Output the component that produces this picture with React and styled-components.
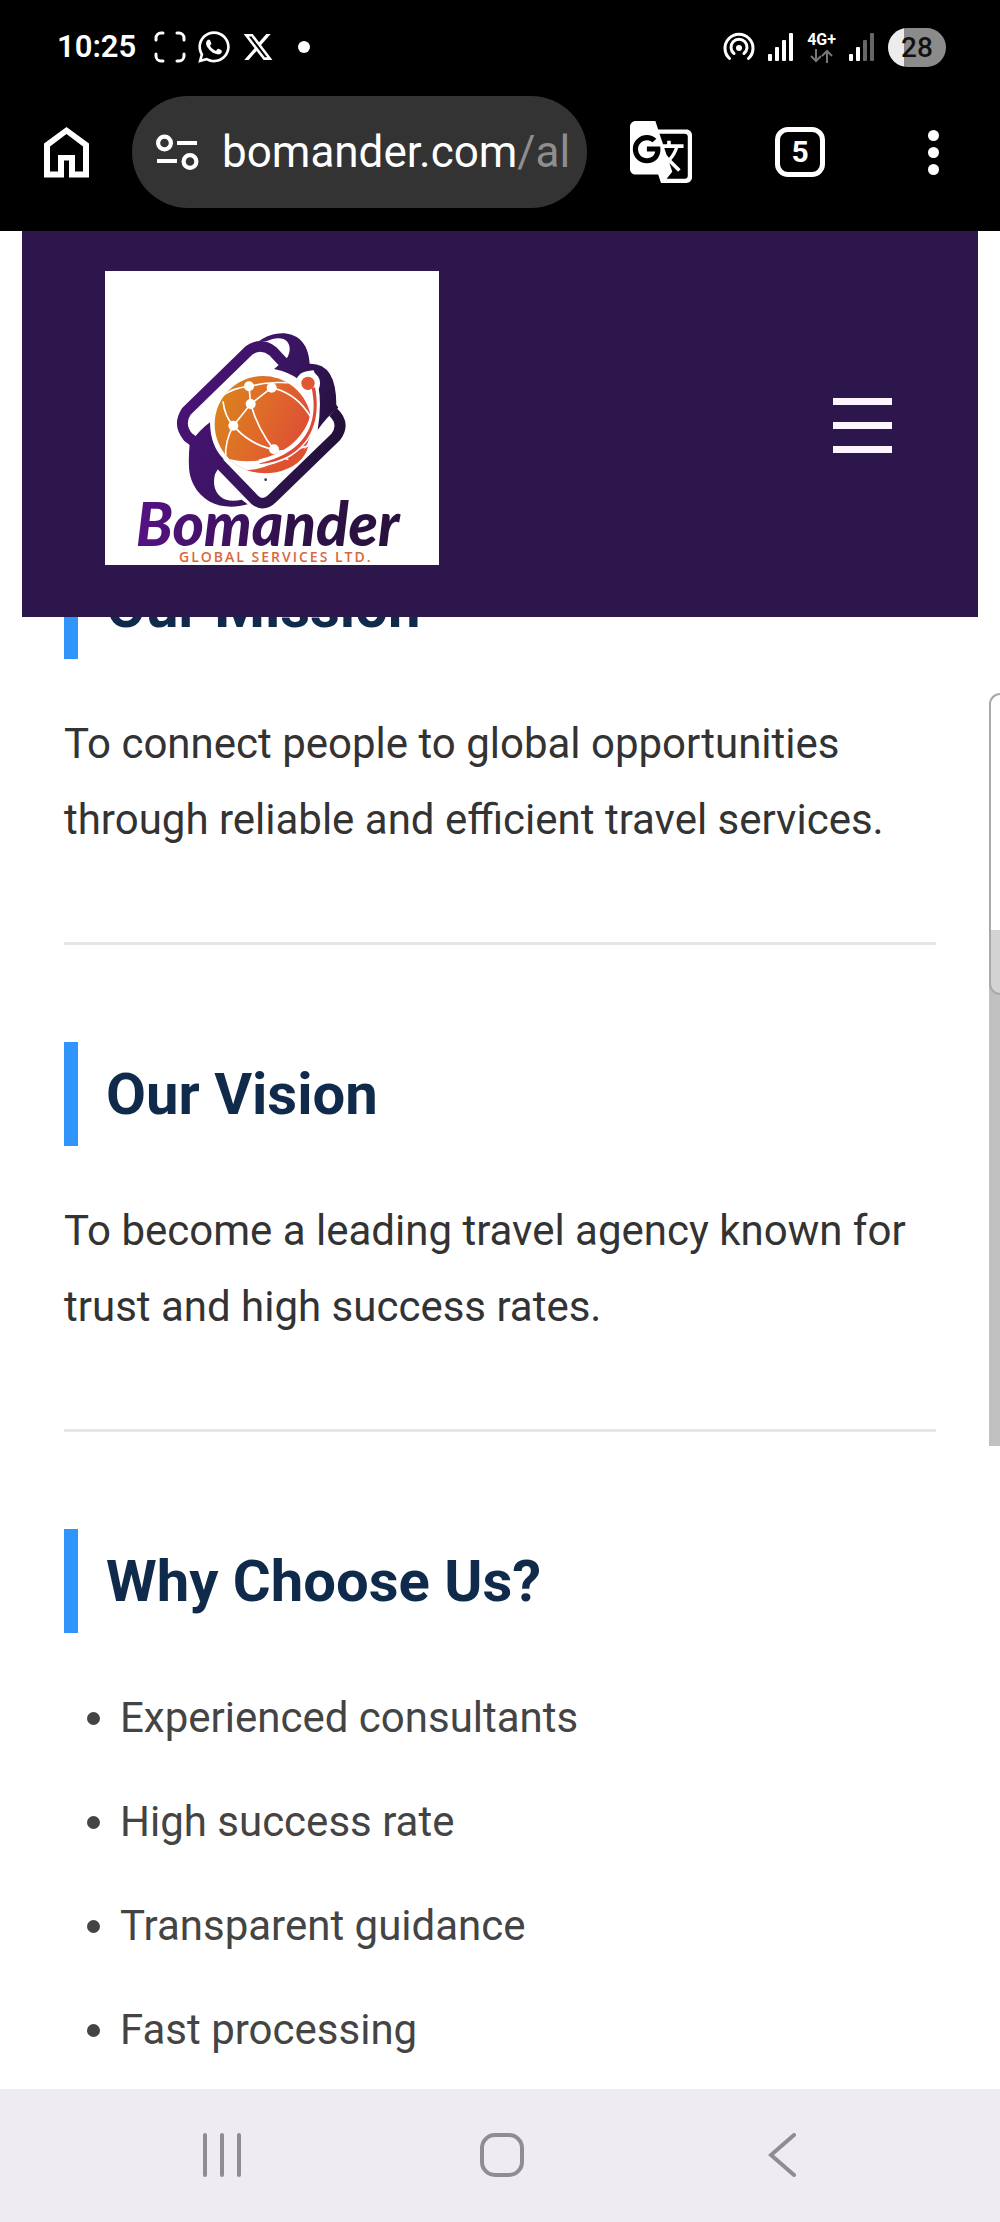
import React from 'react';
import styled, { createGlobalStyle } from 'styled-components';
import { FaWhatsapp } from 'react-icons/fa';
import { FaXTwitter } from 'react-icons/fa6';
import { MdGTranslate } from 'react-icons/md';

const GlobalStyle = createGlobalStyle`
  * {
    box-sizing: border-box;
  }
  body {
    margin: 0;
    background-color: #ffffff;
    font-family: Roboto, 'Liberation Sans', sans-serif;
  }
  button {
    display: flex;
    padding: 0;
    border: none;
    background: none;
    color: inherit;
    font: inherit;
    cursor: pointer;
  }
  svg {
    display: block;
    flex: none;
  }
`;

const Screen = styled.div`
  display: flex;
  flex-direction: column;
  height: 100vh;
  overflow: hidden;
`;

/* status bar */
const StatusBar = styled.div`
  display: flex;
  flex: none;
  justify-content: space-between;
  align-items: center;
  height: 94px;
  padding: 0 54px 0 57px;
  background-color: #000000;
  color: #ffffff;
`;

const StatusGroup = styled.div`
  display: flex;
  align-items: center;
  gap: ${({ $gap }) => $gap}px;
`;

const Clock = styled.time`
  margin-right: 8px;
  font-size: 31px;
  font-weight: 600;
  line-height: 34px;
`;

const MoreDot = styled.span`
  width: 12px;
  height: 12px;
  margin-left: 14px;
  border-radius: 50%;
  background-color: #ffffff;
`;

const Network = styled.div`
  display: flex;
  flex-direction: column;
  align-items: center;
  font-size: 16px;
  font-weight: 700;
  line-height: 18px;
`;

const Battery = styled.div`
  width: 58px;
  height: 39px;
  border-radius: 20px;
  background: linear-gradient(to right, #ececec 28%, #8b8b8b 28%);
  color: #111111;
  font-size: 28px;
  font-weight: 500;
  line-height: 39px;
  text-align: center;
`;

/* browser toolbar */
const Toolbar = styled.div`
  display: flex;
  flex: none;
  align-items: center;
  gap: 43px;
  padding: 2px 42px 23px 44px;
  background-color: #000000;
  color: #ffffff;
`;

const AddressBar = styled.div`
  display: flex;
  flex: 1;
  align-items: center;
  gap: 23px;
  min-width: 0;
  height: 112px;
  padding: 0 12px 0 24px;
  border-radius: 56px;
  background-color: #333333;
`;

const Address = styled.div`
  overflow: hidden;
  font-size: 44px;
  line-height: 56px;
  white-space: nowrap;
`;

const Path = styled.span`
  color: #8e8e8e;
`;

const Actions = styled.div`
  display: flex;
  align-items: center;
  gap: 83px;
`;

const TabsButton = styled.button`
  && {
    justify-content: center;
    align-items: center;
    width: 50px;
    height: 50px;
    border: 5px solid #ffffff;
    border-radius: 13px;
    font-size: 30px;
    font-weight: 700;
    line-height: 30px;
  }
`;

const MenuButton = styled.button`
  && {
    flex-direction: column;
    align-items: center;
    gap: 6px;
    width: 50px;
  }

  span {
    width: 11px;
    height: 11px;
    border-radius: 50%;
    background-color: #ffffff;
  }
`;

/* page */
const Viewport = styled.div`
  position: relative;
  flex: 1;
  min-height: 0;
  overflow: hidden;
`;

const SiteHeader = styled.header`
  position: sticky;
  top: 0;
  z-index: 1;
  display: flex;
  justify-content: space-between;
  align-items: center;
  margin: 0 22px;
  padding: 40px 86px 52px 83px;
  background-color: #2d164c;
`;

const LogoLink = styled.a`
  display: block;
  background-color: #ffffff;
`;

const Hamburger = styled.button`
  && {
    flex-direction: column;
    gap: 17px;
    padding-top: 15px;
  }

  span {
    width: 59px;
    height: 7px;
    background-color: #fdf5ff;
  }
`;

// the page is scrolled, so the first heading runs under the sticky header
const Content = styled.main`
  margin-top: -62px;
  padding: 0 64px;
`;

const Section = styled.section`
  margin-bottom: 97px;
  padding-bottom: 84px;
  border-bottom: 3px solid ${({ $last }) => ($last ? 'transparent' : '#e6e6e6')};
`;

const Title = styled.h2`
  margin: 0 0 47px;
  padding-left: 28px;
  border-left: 14px solid #2f95fb;
  color: #0f2a4a;
  font-size: 58px;
  font-weight: 700;
  line-height: 104px;
`;

const Text = styled.p`
  margin: 0;
  color: #333333;
  font-size: 42px;
  line-height: 76px;
`;

const Reasons = styled.ul`
  margin: 0;
  padding-left: 56px;
  color: #444444;
  font-size: 42px;
  line-height: 76px;
`;

const Reason = styled.li`
  margin-bottom: 28px;
`;

const ScrollTrack = styled.div`
  position: absolute;
  top: 462px;
  right: 0;
  width: 11px;
  height: 753px;
  background: linear-gradient(to bottom, transparent 237px, #c1c1c1 237px);
`;

const ScrollThumb = styled.div`
  height: 302px;
  border: 2px solid #a9a9a9;
  border-right: none;
  border-radius: 11px 0 0 11px;
  background: linear-gradient(to bottom, #ffffff 235px, #d3d3d3 235px);
`;

/* system navigation */
const NavBar = styled.nav`
  display: grid;
  flex: none;
  grid-template-columns: repeat(3, 1fr);
  justify-items: center;
  align-items: center;
  height: 133px;
  padding: 0 78px 2px 82px;
  background-color: #eeebf2;
`;

const Signal = ({ bars }) => (
  <svg width="26" height="28" viewBox="0 0 26 28" fill="#fff">
    <rect x="0" y="21" width="4" height="7" rx="1" />
    <rect x="7" y="14" width="4" height="14" rx="1" />
    <rect x="14" y="7" width="4" height="21" rx="1" opacity={bars > 2 ? 1 : 0.4} />
    <rect x="21" y="0" width="4" height="28" rx="1" opacity={bars > 3 ? 1 : 0.4} />
  </svg>
);

const CaptureIcon = () => (
  <svg width="32" height="32" viewBox="0 0 32 32" fill="none" stroke="#fff" strokeWidth="3" strokeLinecap="round">
    <path d="M2 9V7a5 5 0 0 1 5-5h2M23 2h2a5 5 0 0 1 5 5v2M30 23v2a5 5 0 0 1-5 5h-2M9 30H7a5 5 0 0 1-5-5v-2" />
  </svg>
);

const HotspotIcon = () => (
  <svg width="32" height="30" viewBox="0 0 32 30" fill="none" stroke="#fff" strokeWidth="3" strokeLinecap="round">
    <path d="M6.5 26.5A14 14 0 1 1 25.5 26.5" />
    <path d="M11 21.5A8 8 0 1 1 21 21.5" />
    <circle cx="16" cy="16" r="3" fill="#fff" stroke="none" />
  </svg>
);

const HomeIcon = () => (
  <svg width="45" height="51" viewBox="0 0 45 51">
    <path
      fill="#fff"
      fillRule="evenodd"
      d="M22.5 0 45 16.5V50.5H25V33.500H20V50.5H0V16.5ZM22.5 7 6 19.5V44.5H14V28H31V44.5H39V19.5Z"
    />
  </svg>
);

const TuneIcon = () => (
  <svg width="43" height="36" viewBox="0 0 43 36" fill="none" stroke="#fff" strokeWidth="4.2">
    <circle cx="8.5" cy="9" r="6.4" />
    <circle cx="34" cy="27.5" r="6.4" />
    <path d="M21 9H41M1 27H21" />
  </svg>
);

const BomanderLogo = () => (
  <svg width="334" height="294" viewBox="46 64 1002 882" role="img" aria-label="Bomander Global Services Ltd.">
    <defs>
      <linearGradient id="frame" gradientUnits="userSpaceOnUse" x1="280" y1="400" x2="760" y2="620">
        <stop offset="0" stopColor="#4b1277" />
        <stop offset="0.55" stopColor="#38155e" />
        <stop offset="1" stopColor="#1d1030" />
      </linearGradient>
      <linearGradient id="globe" x1="0" y1="0.3" x2="1" y2="0.7">
        <stop offset="0" stopColor="#d9831d" />
        <stop offset="0.5" stopColor="#e0682a" />
        <stop offset="1" stopColor="#dc4a3a" />
      </linearGradient>
      <linearGradient id="word" x1="0" y1="0" x2="1" y2="0">
        <stop offset="0" stopColor="#571284" />
        <stop offset="0.6" stopColor="#2e1148" />
        <stop offset="1" stopColor="#28123c" />
      </linearGradient>
      <clipPath id="sphere">
        <circle cx="520" cy="524" r="145" />
      </clipPath>
    </defs>

    {/* tilted frame with its curled arrows */}
    <g fill="none" stroke="url(#frame)" strokeWidth="32">
      <path d="M592 350 550 305Q515 277 478 302L290 485Q264 525 295 562L335 592" />
      <path d="M388 640 487 742Q516 778 550 744L738 562Q768 522 730 487" />
    </g>
    <g fill="url(#frame)">
      <path d="M505 276C560 235 655 236 660 342Q740 340 740 465L746 474Q712 500 684 541Q702 430 672 362Q645 362 622 386Q595 366 553 358L572 342L594 322C612 285 590 248 530 275Z" />
      <path d="M361 518Q330 540 300 582Q294 650 302 680C325 760 400 785 474 764L456 750C400 765 362 730 376 674L402 628Q362 590 361 518Z" />
    </g>

    {/* globe and its network lines */}
    <circle cx="520" cy="524" r="156" fill="#fff" />
    <circle cx="655" cy="401" r="36" fill="#fff" />
    <circle cx="520" cy="524" r="145" fill="url(#globe)" />
    <g clipPath="url(#sphere)">
      <g fill="none" stroke="#fff" strokeWidth="5">
        <path d="M395 440Q430 414 478 410Q550 392 620 402" />
        <path d="M400 455Q405 500 431 528L483 463L546 414Q620 430 662 500" />
        <path d="M478 410 483 463Q505 540 553 600Q480 585 431 528Q405 575 408 625" />
        <path d="M553 600 615 645M553 606Q610 602 660 588" />
      </g>
      <path d="M380 614Q440 645 520 630Q625 600 664 500L684 520Q640 625 540 645Q500 664 440 662L370 680Z" fill="#fff" />
    </g>
    <g fill="#fff">
      <circle cx="478" cy="410" r="15" />
      <circle cx="546" cy="414" r="15" />
      <circle cx="483" cy="463" r="15" />
      <circle cx="431" cy="528" r="15" />
      <circle cx="553" cy="599" r="15" />
    </g>
    <path d="M510 641C620 615 700 540 670 415" fill="none" stroke="#fff" strokeWidth="24" />
    <path d="M510 641C630 612 692 540 666 415L676 413C703 550 625 635 510 643Z" fill="#dc4a3a" />
    <circle cx="655" cy="401" r="20" fill="#df5733" />
    <path d="M470 662Q570 662 656 590Q640 650 560 668Q510 676 470 662Z" fill="#de5230" />
    <circle cx="528" cy="690" r="4" fill="#3a3046" />

    <text
      x="138"
      y="890"
      fill="url(#word)"
      fontFamily="Lato, 'Liberation Sans', sans-serif"
      fontSize="180"
      fontStyle="italic"
      fontWeight="900"
    >
      Bomander
    </text>
    <text
      x="268"
      y="936"
      fill="#d8663c"
      fontFamily="'Open Sans', 'Liberation Sans', sans-serif"
      fontSize="42"
      fontWeight="600"
      letterSpacing="6"
    >
      GLOBAL SERVICES LTD.
    </text>
  </svg>
);

const reasons = [
  'Experienced consultants',
  'High success rate',
  'Transparent guidance',
  'Fast processing',
];

const App = () => {
  return (
    <Screen>
      <GlobalStyle />
      <StatusBar>
        <StatusGroup $gap={10}>
          <Clock>10:25</Clock>
          <CaptureIcon />
          <FaWhatsapp size={36} />
          <FaXTwitter size={32} />
          <MoreDot />
        </StatusGroup>
        <StatusGroup $gap={13}>
          <HotspotIcon />
          <Signal bars={4} />
          <Network>
            4G+
            <svg width="24" height="14" viewBox="0 0 24 14" fill="none" stroke="#777" strokeWidth="2">
              <path d="M6 0V12M1 7 6 12 11 7M17 14V2M12 7 17 2 22 7" />
            </svg>
          </Network>
          <Signal bars={2} />
          <Battery>28</Battery>
        </StatusGroup>
      </StatusBar>

      <Toolbar>
        <button type="button" aria-label="Home">
          <HomeIcon />
        </button>
        <AddressBar>
          <TuneIcon />
          <Address>
            bomander.com<Path>/al</Path>
          </Address>
        </AddressBar>
        <Actions>
          <button type="button" aria-label="Translate">
            <MdGTranslate size={62} viewBox="1 1 22 22" />
          </button>
          <TabsButton type="button" aria-label="Tabs">5</TabsButton>
          <MenuButton type="button" aria-label="More">
            <span />
            <span />
            <span />
          </MenuButton>
        </Actions>
      </Toolbar>

      <Viewport>
        <SiteHeader>
          <LogoLink href="#home">
            <BomanderLogo />
          </LogoLink>
          <Hamburger type="button" aria-label="Menu">
            <span />
            <span />
            <span />
          </Hamburger>
        </SiteHeader>
        <Content>
          <Section>
            <Title>Our Mission</Title>
            <Text>
              To connect people to global opportunities through reliable and
              efficient travel services.
            </Text>
          </Section>
          <Section>
            <Title>Our Vision</Title>
            <Text>
              To become a leading travel agency known for trust and high
              success rates.
            </Text>
          </Section>
          <Section $last>
            <Title>Why Choose Us?</Title>
            <Reasons>
              {reasons.map((reason) => (
                <Reason key={reason}>{reason}</Reason>
              ))}
            </Reasons>
          </Section>
        </Content>
        <ScrollTrack>
          <ScrollThumb />
        </ScrollTrack>
      </Viewport>

      <NavBar>
        <button type="button" aria-label="Recent apps">
          <svg width="40" height="44" viewBox="0 0 40 44" stroke="#8f8c93" strokeWidth="4" strokeLinecap="round">
            <path d="M3 2V42M20 2V42M37 2V42" />
          </svg>
        </button>
        <button type="button" aria-label="Home screen">
          <svg width="44" height="44" viewBox="0 0 44 44" fill="none" stroke="#8f8c93" strokeWidth="4">
            <rect x="2" y="2" width="40" height="40" rx="13" />
          </svg>
        </button>
        <button type="button" aria-label="Back">
          <svg width="28" height="44" viewBox="0 0 28 44" fill="none" stroke="#8f8c93" strokeWidth="4" strokeLinecap="round">
            <path d="M26 2 3 22 26 42" />
          </svg>
        </button>
      </NavBar>
    </Screen>
  );
};

export default App;
